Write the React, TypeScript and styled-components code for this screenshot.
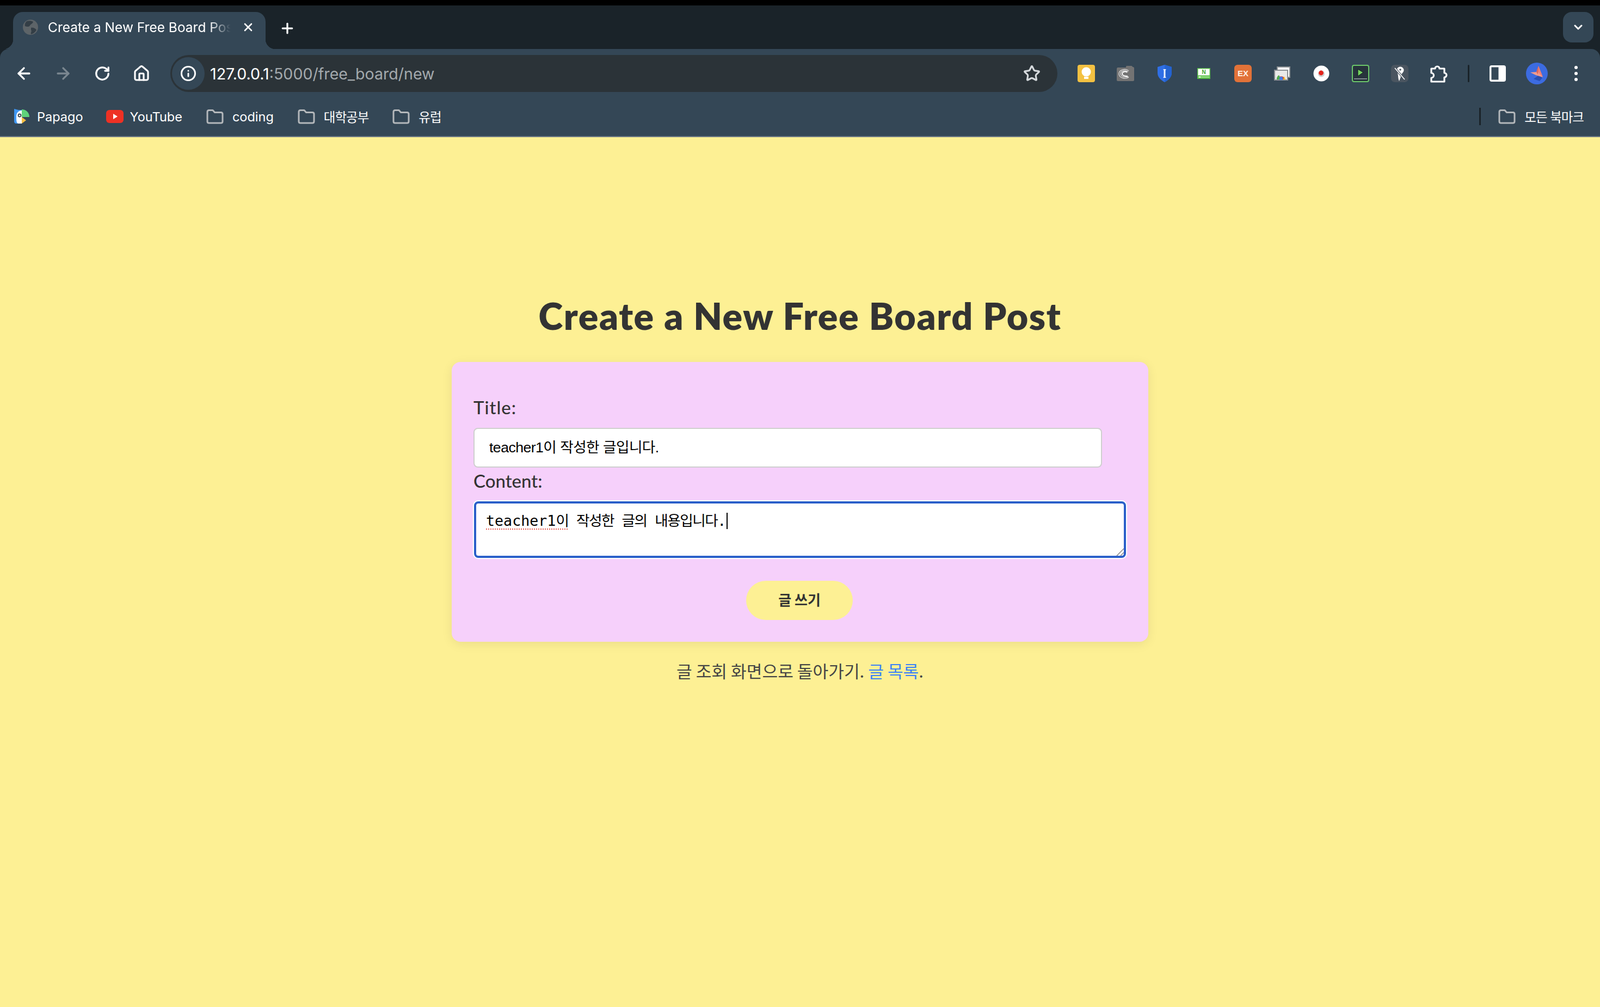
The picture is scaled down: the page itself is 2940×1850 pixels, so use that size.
import React from "react";
import styled, { createGlobalStyle } from "styled-components";
import { ArrowLeft, ArrowRight, ChevronDown, House, Info, Plus, RotateCw, Star, X } from "lucide-react";

const UI_FONT = `Inter, "Noto Sans CJK KR", sans-serif`;
const HAND_FONT = `"Comic Sans MS", Lato, "Noto Sans CJK KR", sans-serif`;
const PAGE_YELLOW = "#fdf094";

const GlobalStyle = createGlobalStyle`
  html, body {
    margin: 0;
    padding: 0;
    background: ${PAGE_YELLOW};
  }
  * {
    box-sizing: border-box;
  }
`;

const Folder = () => (
  <svg width="36" height="28" viewBox="-2 0 36 28" fill="none">
    <path d="M2 5.5C2 3.5 3 2.5 5 2.5H12L15.5 6.5H27C29 6.5 30 7.5 30 9.5V23C30 25 29 26 27 26H5C3 26 2 25 2 23Z" stroke="#b4b8bb" strokeWidth="3" strokeLinejoin="round" />
  </svg>
);

const Papago = () => (
  <svg width="28" height="28" viewBox="0 0 28 28">
    <path d="M0 0L8 2H14V27H4C1.5 27 0 25.5 0 23Z" fill="#3f97f2" />
    <path d="M14 3V27H8C4 27 4 21 4 14C4 7 8 3 14 3Z" fill="#fff" />
    <circle cx="10" cy="12" r="3.4" fill="#3c4650" />
    <circle cx="10" cy="12" r="1.5" fill="#fff" />
    <path d="M14 1C22 1 28 7 28 15H14Z" fill="#5ed27a" />
    <path d="M14 15L22 21L14 27Z" fill="#f4bd42" />
  </svg>
);

const YouTube = () => (
  <YouTubeMark width="32" height="24" viewBox="0 0 32 24">
    <rect x="0" y="0" width="32" height="24" rx="6" fill="#ee3124" />
    <path d="M13 7L21 12L13 17Z" fill="#fff" />
  </YouTubeMark>
);

const Globe = () => (
  <svg width="28" height="28" viewBox="0 0 28 28">
    <circle cx="14" cy="14" r="14" fill="#5d6468" />
    <path d="M7 3C11 2 16 2 19 4C18 8 14 8 13 11C11 14 7 13 4 12C3 8 5 5 7 3ZM15 15C19 14 23 16 25 19C23 23 19 26 15 27C14 23 17 22 15 19Z" fill="#333e46" />
  </svg>
);

const Bulb = () => (
  <svg width="32" height="32" viewBox="0 0 32 32">
    <rect width="32" height="32" rx="4" fill="#f3c142" />
    <circle cx="16" cy="13" r="8.5" fill="#fff" />
    <rect x="12" y="15" width="8" height="6" fill="#fff" />
    <rect x="12" y="22" width="8" height="4" fill="#fff" />
  </svg>
);

const Torrent = () => (
  <svg width="32" height="30" viewBox="0 0 32 30">
    <path d="M17 3C17 1 18 1 19 1H27C28 1 29 2 29 3H30C31 3 32 4 32 5V27C32 28 31 29 30 29H2C1 29 0 28 0 27V7C0 5 1 4 2 4H17Z" fill="#737373" />
    <g fill="none" stroke="#d8d8d8">
      <path d="M22 22C18 25 5 25 4 16C4 8 16 5 22 10" strokeWidth="1.4" />
      <path d="M22 21C18 22 8 22 7 16C7 10 16 8 21 12" strokeWidth="1.4" />
      <path d="M20 20C17 20 11 20 10 16C10 12 16 10 19 13" strokeWidth="1.8" stroke="#fff" />
    </g>
  </svg>
);

const Shield = () => (
  <svg width="28" height="32" viewBox="0 0 28 32">
    <path d="M14 0L27 4V15C27 23 21 28 14 32C7 28 1 23 1 15V4Z" fill="#2f6fe6" />
    <path d="M14 0L27 4V15C27 23 21 28 14 32Z" fill="#2463d1" />
    <path d="M11.5 8H16.5V9.5H15.5V22.5H16.5V24H11.5V22.5H12.5V9.5H11.5Z" fill="#eaf1ff" />
  </svg>
);

const Naver = () => (
  <svg width="24" height="20" viewBox="0 0 24 20">
    <rect width="24" height="20" fill="#55b944" />
    <rect x="1.5" y="1.5" width="21" height="12" fill="#fff" />
    <rect x="1.5" y="15" width="21" height="3" fill="#8fdc7f" />
    <rect x="3" y="15.5" width="3" height="2" fill="#fff" />
    <text x="12" y="11" textAnchor="middle" fontFamily="Liberation Sans" fontWeight="700" fontSize="10" fill="#3da52c">N</text>
  </svg>
);

const Ex = () => (
  <svg width="32" height="32" viewBox="0 0 32 32">
    <rect width="32" height="32" rx="6" fill="#e27238" />
    <text x="16" y="21" textAnchor="middle" fontFamily="Liberation Sans" fontWeight="700" fontSize="15" fill="#fdf1e6">EX</text>
  </svg>
);

const ChromeStack = () => (
  <svg width="30" height="26" viewBox="0 0 30 26">
    <rect x="6" y="1" width="23" height="19" fill="#fff" stroke="#8a8f93" strokeWidth="2" />
    <rect x="1" y="7" width="24" height="18" fill="#e9e9e9" stroke="#8a8f93" strokeWidth="2" />
    <path d="M5 24A8.5 8.5 0 0 1 21 24Z" fill="#d8442f" />
    <path d="M5 24A8.5 8.5 0 0 1 9 16L13 24Z" fill="#4eaa4e" />
    <path d="M17 24A8 8 0 0 0 21 24L19 18Z" fill="#f4c430" />
    <circle cx="13" cy="22" r="3.2" fill="#3f7fe8" />
  </svg>
);

const Record = () => (
  <svg width="30" height="30" viewBox="0 0 30 30">
    <circle cx="15" cy="15" r="14.5" fill="#fff" />
    <circle cx="15" cy="15.5" r="6" fill="#cfcfcf" />
    <circle cx="14.5" cy="14" r="4.4" fill="#e3231b" />
  </svg>
);

const Player = () => (
  <svg width="32" height="32" viewBox="0 0 32 32">
    <rect x="1" y="1" width="30" height="30" rx="3" fill="#27333c" stroke="#6cc76a" strokeWidth="2" />
    <path d="M11 8L21 14L11 21Z" fill="#74d15f" stroke="#101820" />
    <rect x="4" y="25" width="24" height="1.5" fill="#9aa3a8" />
  </svg>
);

const PinOff = () => (
  <svg width="32" height="32" viewBox="0 0 32 32">
    <rect width="32" height="32" rx="7" fill="#4a5560" />
    <circle cx="17" cy="10" r="6.5" fill="#fff" />
    <circle cx="17" cy="9" r="1.8" fill="#4a5560" />
    <path d="M12 14H21L18 22L15 30C14 28 13 24 13 20Z" fill="#fff" />
    <path d="M7 6L25 27" stroke="#4a5560" strokeWidth="4" />
    <path d="M7 6L25 27" stroke="#fff" strokeWidth="1.6" />
  </svg>
);

const PuzzlePiece = () => (
  <svg width="34" height="36" viewBox="0 0 34 36" fill="none">
    <path d="M3 9H10A4 4 0 0 1 18 9H27V17A4 4 0 0 1 27 25V33H3V26A4.5 4.5 0 0 0 3 17Z" stroke="#fff" strokeWidth="3.2" strokeLinejoin="round" />
  </svg>
);

const SidePanel = () => (
  <svg width="30" height="30" viewBox="0 0 30 30">
    <rect x="1.5" y="1.5" width="27" height="27" rx="2.5" fill="#fff" stroke="#fff" strokeWidth="3" />
    <rect x="3.5" y="3.5" width="13" height="23" fill="#344756" />
  </svg>
);

const Avatar = () => (
  <svg width="40" height="40" viewBox="0 0 40 40">
    <circle cx="20" cy="20" r="20" fill="#3c6be0" />
    <path d="M14 30L24 23L30 28L25 34Z" fill="#2a4fb0" />
    <path d="M23 6L31 26L22 22L19 17Z" fill="#ee7f74" />
    <path d="M8 18L22 17L31 27L18 23Z" fill="#f19b8e" />
    <path d="M23 6L22 22L19 17Z" fill="#d9655c" />
  </svg>
);

const Dots = () => (
  <svg width="8" height="30" viewBox="0 0 8 30">
    <circle cx="4" cy="4" r="3" fill="#fff" />
    <circle cx="4" cy="15" r="3" fill="#fff" />
    <circle cx="4" cy="26" r="3" fill="#fff" />
  </svg>
);

const ResizeGrip = () => (
  <Grip width="14" height="14" viewBox="0 0 14 14">
    <path d="M1 14L14 1M8 14L14 8" stroke="#6f6f6f" strokeWidth="1.2" />
  </Grip>
);

const bookmarks = [
  { name: "Papago", icon: <Papago />, ko: false },
  { name: "YouTube", icon: <YouTube />, ko: false },
  { name: "coding", icon: <Folder />, ko: false },
  { name: "대학공부", icon: <Folder />, ko: true },
  { name: "유럽", icon: <Folder />, ko: true },
];

export default function App() {
  return (
    <Window>
      <GlobalStyle />
      <TopEdge />
      <TabStrip>
        <Tab>
          <Globe />
          <TabTitle>Create a New Free Board Post</TabTitle>
          <X size={24} color="#fff" strokeWidth={2.6} />
        </Tab>
        <NewTab>
          <Plus size={30} color="#fff" strokeWidth={2.6} />
        </NewTab>
        <TabMenu>
          <ChevronDown size={24} color="#fff" strokeWidth={3} />
        </TabMenu>
      </TabStrip>

      <Toolbar>
        <NavSlot><ArrowLeft size={34} color="#fff" strokeWidth={2.4} /></NavSlot>
        <NavSlot><ArrowRight size={34} color="#7b8790" strokeWidth={2.4} /></NavSlot>
        <NavSlot><RotateCw size={30} color="#fff" strokeWidth={2.6} /></NavSlot>
        <NavSlot><House size={32} color="#fff" strokeWidth={2.4} /></NavSlot>
        <Omnibox>
          <SiteInfo><Info size={30} color="#fff" strokeWidth={2.4} /></SiteInfo>
          <Url>
            127.0.0.1<UrlRest>:5000/free_board/new</UrlRest>
          </Url>
          <Star size={32} color="#d5d9dc" strokeWidth={2.4} />
        </Omnibox>
        <Extensions>
          <ExtSlot><Bulb /></ExtSlot>
          <ExtSlot><Torrent /></ExtSlot>
          <ExtSlot><Shield /></ExtSlot>
          <ExtSlot><Naver /></ExtSlot>
          <ExtSlot><Ex /></ExtSlot>
          <ExtSlot><ChromeStack /></ExtSlot>
          <ExtSlot><Record /></ExtSlot>
          <ExtSlot><Player /></ExtSlot>
          <ExtSlot><PinOff /></ExtSlot>
          <ExtSlot><PuzzlePiece /></ExtSlot>
          <ToolbarDivider />
          <ExtSlot><SidePanel /></ExtSlot>
          <ExtSlot><Avatar /></ExtSlot>
          <ExtSlot><Dots /></ExtSlot>
        </Extensions>
      </Toolbar>

      <BookmarkBar>
        {bookmarks.map(item => (
          <Bookmark key={item.name} $ko={item.ko}>
            <BookmarkIcon>{item.icon}</BookmarkIcon>
            {item.name}
          </Bookmark>
        ))}
        <AllBookmarks>
          <BookmarkDivider />
          <Bookmark $ko>
            <BookmarkIcon><Folder /></BookmarkIcon>
            모든 북마크
          </Bookmark>
        </AllBookmarks>
      </BookmarkBar>

      <Page>
        <Heading>Create a New Free Board Post</Heading>
        <Card>
          <Label>Title:</Label>
          <TitleInput readOnly value="teacher1이 작성한 글입니다." />
          <Label $tight>Content:</Label>
          <ContentBox>
            <Misspelled>teacher1<Hangul>이</Hangul></Misspelled>
            <Hangul> 작성한 글의 내용입니다</Hangul>.<Caret />
            <ResizeGrip />
          </ContentBox>
          <SubmitRow>
            <SubmitButton type="button">글 쓰기</SubmitButton>
          </SubmitRow>
        </Card>
        <BackText>
          글 조회 화면으로 돌아가기. <BackLink href="#">글 목록</BackLink>.
        </BackText>
      </Page>
    </Window>
  );
}

const Window = styled.div`
  width: 2940px;
  height: 1850px;
  display: flex;
  flex-direction: column;
  overflow: hidden;
  background: #1a2329;
`;

const TopEdge = styled.div`
  height: 10px;
  background: #000;
`;

const TabStrip = styled.div`
  height: 80px;
  display: flex;
  align-items: flex-start;
  padding: 12px 12px 0 24px;
  background: #1a2329;
`;

const Tab = styled.div`
  position: relative;
  width: 464px;
  height: 68px;
  display: flex;
  align-items: center;
  padding: 0 14px 12px 18px;
  background: #344756;
  border-radius: 18px 18px 0 0;
  &::before,
  &::after {
    content: "";
    position: absolute;
    bottom: 0;
    width: 18px;
    height: 18px;
  }
  &::before {
    left: -18px;
    background: radial-gradient(circle at 0 0, transparent 18px, #344756 18.5px);
  }
  &::after {
    right: -18px;
    background: radial-gradient(circle at 100% 0, transparent 18px, #344756 18.5px);
  }
`;

const TabTitle = styled.span`
  width: 336px;
  margin: 0 20px 0 18px;
  overflow: hidden;
  white-space: nowrap;
  font: 400 24.5px ${UI_FONT};
  color: #fff;
  mask-image: linear-gradient(to right, #000 88%, transparent 100%);
`;

const NewTab = styled.div`
  width: 42px;
  height: 60px;
  margin-left: 19px;
  display: flex;
  align-items: center;
  justify-content: center;
`;

const TabMenu = styled.div`
  width: 56px;
  height: 56px;
  margin-left: auto;
  display: flex;
  align-items: center;
  justify-content: center;
  background: #344756;
  border-radius: 16px;
`;

const Toolbar = styled.div`
  height: 90px;
  display: flex;
  align-items: center;
  padding: 0 8px;
  background: #344756;
  border-radius: 16px 16px 0 0;
`;

const NavSlot = styled.div`
  width: 72px;
  height: 72px;
  display: flex;
  align-items: center;
  justify-content: center;
`;

const Omnibox = styled.div`
  width: 1630px;
  height: 68px;
  margin-left: 17px;
  display: flex;
  align-items: center;
  padding: 0 31px 0 3px;
  background: #2b3338;
  border-radius: 34px;
`;

const SiteInfo = styled.div`
  width: 60px;
  height: 60px;
  display: flex;
  align-items: center;
  justify-content: center;
  background: #344756;
  border-radius: 50%;
`;

const Url = styled.div`
  flex: 1;
  margin-left: 10px;
  font: 400 28.6px ${UI_FONT};
  color: #fff;
`;

const UrlRest = styled.span`
  color: #a3a9ad;
`;

const Extensions = styled.div`
  display: flex;
  align-items: center;
  margin-left: 17px;
`;

const ExtSlot = styled.div`
  width: 72px;
  height: 72px;
  display: flex;
  align-items: center;
  justify-content: center;
`;

const ToolbarDivider = styled.div`
  width: 3px;
  height: 32px;
  margin: 0 16px 0 17px;
  background: #1a2329;
  border-radius: 2px;
`;

const BookmarkBar = styled.div`
  height: 72px;
  display: flex;
  align-items: center;
  gap: 42px;
  padding: 0 30px 2px 26px;
  background: #344756;
  border-bottom: 2px solid #6d7a86;
`;

const Bookmark = styled.div<{ $ko?: boolean }>`
  display: flex;
  align-items: center;
  gap: 14px;
  font: 400 23.5px ${UI_FONT};
  letter-spacing: ${p => (p.$ko ? "-1px" : "0")};
  color: #fff;
  white-space: nowrap;
`;

const BookmarkIcon = styled.span`
  display: flex;
  align-items: center;
`;

const YouTubeMark = styled.svg`
  margin-right: -2px;
`;

const AllBookmarks = styled.div`
  margin-left: auto;
  display: flex;
  align-items: center;
  gap: 30px;
`;

const BookmarkDivider = styled.div`
  width: 3px;
  height: 32px;
  background: #1a2329;
`;

const Page = styled.main`
  flex: 1;
  display: flex;
  flex-direction: column;
  align-items: center;
  padding-top: 288px;
  background: ${PAGE_YELLOW};
`;

const Heading = styled.h1`
  margin: 0;
  height: 80px;
  font: 800 68px/80px ${HAND_FONT};
  letter-spacing: 1.6px;
  color: #333;
`;

const Card = styled.section`
  width: 1280px;
  height: 514px;
  margin-top: 45px;
  padding: 63px 40px 40px;
  background: #f6d0fb;
  border-radius: 16px;
  box-shadow: 0 4px 20px rgba(0, 0, 0, 0.08);
`;

const Label = styled.label<{ $tight?: boolean }>`
  display: block;
  height: 40px;
  margin-bottom: 18px;
  font: 500 33px/40px ${HAND_FONT};
  letter-spacing: ${p => (p.$tight ? "0" : "1px")};
  color: #333;
`;

const TitleInput = styled.input`
  display: block;
  width: 1155px;
  height: 73px;
  margin-bottom: 4px;
  padding: 0 27px 6px;
  background: #fff;
  border: 2px solid #cfcfcf;
  border-radius: 8px;
  font: 400 26.67px "Liberation Sans", "Noto Sans CJK KR", sans-serif;
  letter-spacing: -0.55px;
  color: #000;
  outline: none;
`;

const ContentBox = styled.div`
  position: relative;
  height: 104px;
  margin: 0 1px;
  padding: 14px 18px;
  background: #fff;
  border: 4px solid #2a5fc9;
  border-radius: 8px;
  box-shadow: 0 0 0 2px #fff;
  font: 400 26.67px/36px "DejaVu Sans Mono", "Noto Sans CJK KR", monospace;
  color: #000;
  white-space: pre;
`;

const Hangul = styled.span`
  letter-spacing: -1.5px;
`;

const Misspelled = styled.span`
  text-decoration: underline dotted #e2574c 2px;
  text-underline-offset: 5px;
`;

const Caret = styled.span`
  display: inline-block;
  width: 2px;
  height: 30px;
  margin-left: 1px;
  vertical-align: -6px;
  background: #000;
`;

const Grip = styled.svg`
  position: absolute;
  right: 0;
  bottom: 0;
`;

const SubmitRow = styled.div`
  display: flex;
  justify-content: center;
  margin-top: 42px;
  padding-right: 2px;
`;

const SubmitButton = styled.button`
  width: 196px;
  height: 72px;
  padding-bottom: 6px;
  border: none;
  border-radius: 36px;
  background: ${PAGE_YELLOW};
  font: 700 26px "Noto Sans CJK KR", sans-serif;
  color: #333;
`;

const BackText = styled.p`
  margin: 33px 0 0;
  font: 400 31.2px/40px "Noto Sans CJK KR", sans-serif;
  color: #444;
  white-space: pre;
`;

const BackLink = styled.a`
  color: #3b82f6;
  text-decoration: none;
`;
